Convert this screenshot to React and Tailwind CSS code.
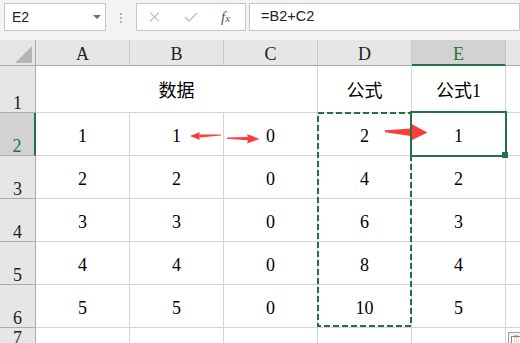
import React from 'react';

const SERIF = "font-['Liberation_Serif','Noto_Sans_CJK_SC',serif]";
const SANS = "font-['Liberation_Sans','Noto_Sans_CJK_SC',sans-serif]";

const cols = ['A', 'B', 'C', 'D', 'E'];
const data = [
    [1, 1, 0, 2, 1],
    [2, 2, 0, 4, 2],
    [3, 3, 0, 6, 3],
    [4, 4, 0, 8, 4],
    [5, 5, 0, 10, 5],
];

const ColHead = ({ label, active }) => (
    <div
        className={`flex items-center justify-center pt-[4px] text-[18px] border-r border-r-[#c6c6c6] ${
            active
                ? 'bg-[#d2d2d2] text-[#217346] border-b-2 border-b-[#217346]'
                : 'bg-[#e6e6e6] text-[#222] border-b border-b-[#ababab]'
        }`}
    >
        {label}
    </div>
);

const RowHead = ({ label, active }) => (
    <div
        className={`flex items-end justify-center text-[18px] leading-none border-b border-b-[#ababab] ${
            active
                ? 'bg-[#d2d2d2] text-[#217346] border-r-2 border-r-[#217346]'
                : 'bg-[#e6e6e6] text-[#222] border-r border-r-[#ababab]'
        }`}
    >
        {label}
    </div>
);

const Cell = ({ children, className = '' }) => (
    <div
        className={`flex items-center justify-center pt-[4px] text-[18px] text-black bg-white border-r border-b border-[#d4d4d4] ${className}`}
    >
        {children}
    </div>
);

const FormulaBar = () => (
    <div className={`h-[40px] bg-[#f3f3f3] flex items-start pt-[3px] ${SANS}`}>
        {/* name box */}
        <div className="ml-[4px] w-[102px] h-[28px] bg-white border border-[#c6c6c6] flex items-center justify-between pl-[7px] pr-[4px]">
            <span className="text-[14px] text-[#222]">E2</span>
            <svg width="8" height="4" viewBox="0 0 8 4">
                <path d="M0 0h8L4 4z" fill="#6b6b6b" />
            </svg>
        </div>
        {/* grip dots */}
        <div className="w-[30px] flex flex-col items-center gap-[2px] pt-[10px]">
            <div className="w-[2px] h-[2px] bg-[#b0b0b0]"></div>
            <div className="w-[2px] h-[2px] bg-[#b0b0b0]"></div>
            <div className="w-[2px] h-[2px] bg-[#b0b0b0]"></div>
        </div>
        {/* cancel / enter / fx */}
        <div className="w-[110px] h-[28px] bg-white border border-[#c6c6c6] flex items-center pl-[12px]">
            <svg width="11" height="10" viewBox="0 0 11 10">
                <path d="M1 0.5L10 9.5M10 0.5L1 9.5" stroke="#c3c3c3" strokeWidth="1.3" fill="none" />
            </svg>
            <svg className="ml-[24px]" width="14" height="10" viewBox="0 0 14 10">
                <path d="M1 5L5 9L13 1" stroke="#c3c3c3" strokeWidth="1.5" fill="none" />
            </svg>
            <span className="ml-[23px] italic font-['Liberation_Serif',serif] text-[15px] text-[#555] leading-none">
                f<span className="text-[11px]">x</span>
            </span>
        </div>
        {/* formula input */}
        <div className="ml-[3px] flex-1 h-[28px] bg-white border border-[#c6c6c6] flex items-center pl-[11px] text-[14.5px] text-[#222]">
            =B2+C2
        </div>
    </div>
);

export default function App() {
    return (
        <div className="relative w-[520px] h-[343px] overflow-hidden bg-white">
            <FormulaBar />

            <div
                className={`grid grid-cols-[36px_94px_94px_94px_94px_94px_1fr] grid-rows-[26px_47px_43px_43px_43px_43px_43px_20px] ${SERIF}`}
            >
                {/* header row */}
                <div className="bg-[#e6e6e6] border-r border-b border-[#ababab] flex items-end justify-end pr-[3px] pb-[2px]">
                    <svg width="17" height="17" viewBox="0 0 17 17">
                        <path d="M0 17L17 0V17z" fill="#b5b5b5" />
                    </svg>
                </div>
                {cols.map((c) => (
                    <ColHead key={c} label={c} active={c === 'E'} />
                ))}
                <div className="bg-[#e6e6e6] border-b border-b-[#ababab]"></div>

                {/* row 1 */}
                <RowHead label="1" />
                <Cell className="col-span-3">数据</Cell>
                <Cell>公式</Cell>
                <Cell>公式1</Cell>
                <Cell className="border-r-0" />

                {/* rows 2-6 */}
                {data.map((row, i) => (
                    <React.Fragment key={i}>
                        <RowHead label={String(i + 2)} active={i === 0} />
                        {row.map((v, j) => (
                            <Cell key={j}>{v}</Cell>
                        ))}
                        <Cell className="border-r-0" />
                    </React.Fragment>
                ))}

                {/* row 7 */}
                <RowHead label="7" />
                <Cell />
                <Cell />
                <Cell />
                <Cell />
                <Cell />
                <Cell className="border-r-0" />
            </div>

            {/* copy marquee + arrows */}
            <svg className="absolute left-0 top-0 pointer-events-none" width="520" height="343" viewBox="0 0 520 343">
                <rect x="318" y="113" width="93" height="213" fill="none" stroke="#217346" strokeWidth="2" strokeDasharray="6 3" />
                <polygon points="190,136 200,132 199,134.5 221,134.5 221,135.6 199,137.5 200,140" fill="#ff3c3c" />
                <polygon points="227,137.4 248,137 247,134 259.5,139 247,143.5 248,140.2 227,138.7" fill="#ff3c3c" />
                <polygon points="385,130.3 411,128.5 411.5,124 427.5,132.5 410,141 410.5,136 385,132.2" fill="#ff3c3c" />
            </svg>

            {/* active cell E2 */}
            <div className="absolute left-[410px] top-[111px] w-[97px] h-[46px] border-2 border-[#217346] pointer-events-none"></div>
            <div className="absolute left-[502px] top-[152px] w-[6px] h-[6px] bg-[#217346]"></div>

            {/* paste options */}
            <div className="absolute left-[508px] top-[332px] w-[16px] h-[16px] border border-[#a0a0a0] bg-[#f3f3f3] flex items-start justify-start pl-[2px] pt-[2px]">
                <svg width="11" height="11" viewBox="0 0 11 11">
                    <rect x="0.5" y="1.5" width="9" height="9" fill="#fff" stroke="#8a8a8a" />
                    <rect x="3" y="0.5" width="4" height="2" fill="#8a8a8a" />
                    <path d="M3 5h5M3 7h5" stroke="#e0b400" strokeWidth="1" strokeDasharray="1 1" />
                </svg>
            </div>
        </div>
    );
}
